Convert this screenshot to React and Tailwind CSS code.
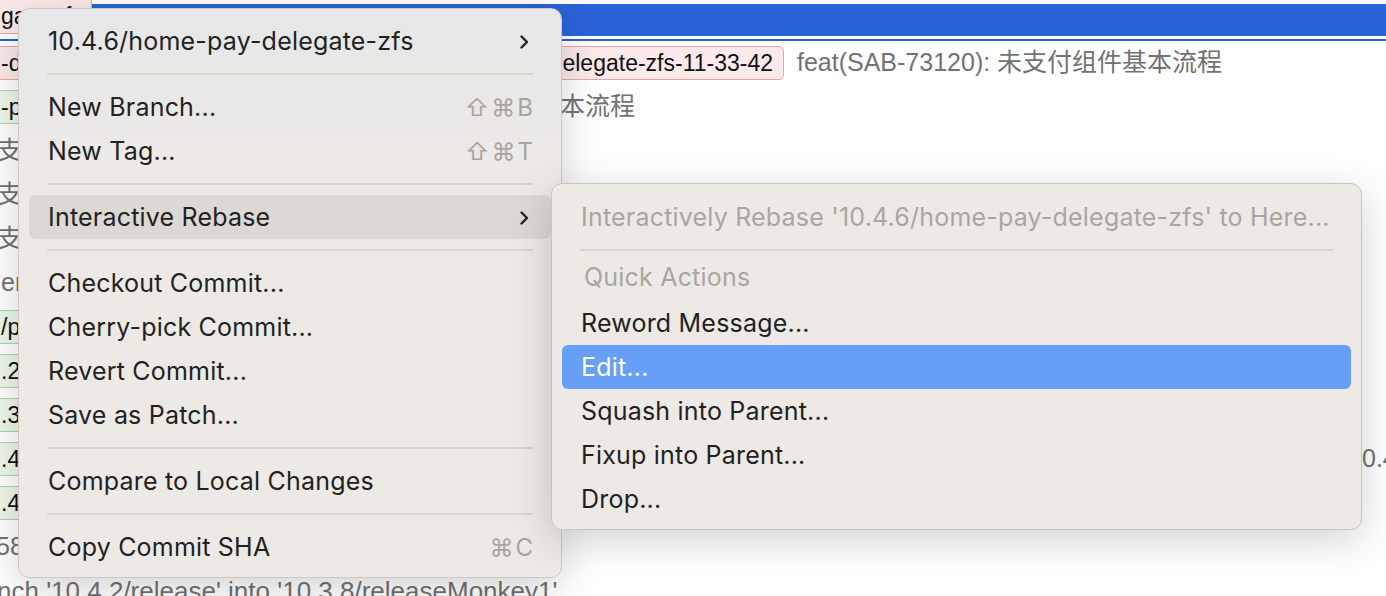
import React from "react";

const rowFont = { fontFamily: '"Liberation Sans", "Noto Sans CJK SC", sans-serif' };
const menuFont = { fontFamily: 'Inter, "Noto Sans", sans-serif' };
const keyFont = { fontFamily: 'Inter, "DejaVu Sans", sans-serif' };

const PinkTag = ({ children, className = "" }) => (
  <div
    className={`h-[34px] shrink-0 flex items-center px-[10px] rounded-[5px] border border-[#F1A3A3] bg-[#FCEAEA] text-[#111] text-[23px] whitespace-nowrap overflow-hidden ${className}`}
  >
    {children}
  </div>
);

const GreenTag = ({ children, className = "" }) => (
  <div
    className={`h-[34px] shrink-0 flex items-center px-[10px] rounded-[5px] border border-[#A9D9A0] bg-[#EDF7EA] text-[#111] text-[23px] whitespace-nowrap overflow-hidden ${className}`}
  >
    {children}
  </div>
);

const Msg = ({ children, className = "" }) => (
  <span className={`text-[#727272] text-[25px] whitespace-nowrap ${className}`}>{children}</span>
);

const Chevron = () => (
  <svg width="11" height="16" viewBox="0 0 11 16" fill="none">
    <path d="M2.5 2.5L8 8L2.5 13.5" stroke="#222" strokeWidth="2.4" strokeLinecap="round" strokeLinejoin="round" />
  </svg>
);

const Separator = () => (
  <div className="h-[22px] flex items-center px-[18px]">
    <div className="h-[2px] w-full bg-[#D8D5D1]" />
  </div>
);

const Item = ({ label, shortcut, chevron, active, selected, disabled }) => (
  <div
    className={`h-[44px] flex items-center justify-between pt-[1px] pl-[19px] ${shortcut ? "pr-[16px]" : "pr-[21px]"} rounded-[6px] ${
      active ? "bg-[#DCD9D4]" : ""
    } ${selected ? "bg-[#679EF6] text-white" : disabled ? "text-[#A9A6A2]" : "text-[#222]"}`}
  >
    <span className="whitespace-nowrap">{label}</span>
    {shortcut && (
      <span className="text-[#A8A5A1] text-[24px] tracking-[2px]" style={keyFont}>
        {shortcut}
      </span>
    )}
    {chevron && <Chevron />}
  </div>
);

const App = () => {
  return (
    <div className="relative w-[1386px] h-[596px] overflow-hidden bg-white" style={rowFont}>
      {/* commit list */}
      <div className="flex flex-col">
        <div className="h-[41px]">
          <div className="flex items-start">
            <PinkTag className="-ml-[10px] w-[102px] rounded-t-none border-t-0">gate-zfs</PinkTag>
            <div className="flex-1 mt-[4px] h-[32px] bg-[#2A63D8]" />
          </div>
          <div className="mt-[3px] h-[2px] bg-[#2A63D8]" />
        </div>

        <div className="h-[44px] flex items-center">
          <div className="w-[784px] shrink-0 flex items-center justify-between">
            <PinkTag className="-ml-[10px] w-[200px]">-delegate-zfs</PinkTag>
            <PinkTag className="justify-end w-[400px]">home-pay-delegate-zfs-11-33-42</PinkTag>
          </div>
          <Msg className="ml-[13px]">feat(SAB-73120): 未支付组件基本流程</Msg>
        </div>

        <div className="h-[44px] flex items-center">
          <div className="w-[635px] shrink-0 flex items-center justify-between">
            <GreenTag className="-ml-[10px] w-[200px]">-pay-delegate</GreenTag>
            <Msg>feat(SAB-73120): 未支付组件基本流程</Msg>
          </div>
        </div>

        {["支付组件基本流程", "支付组件基本流程", "支付组件基本流程"].map((t, i) => (
          <div key={i} className="h-[44px] flex items-center">
            <Msg className="-ml-[3px]">{t}</Msg>
          </div>
        ))}

        <div className="h-[44px] flex items-center">
          <Msg className="ml-[1px]">erge branch</Msg>
        </div>

        {["/pay-release", ".2/release", ".3/release"].map((t, i) => (
          <div key={i} className="h-[44px] flex items-center">
            <GreenTag className="-ml-[10px] w-[200px]">{t}</GreenTag>
          </div>
        ))}

        <div className="h-[44px] flex items-center">
          <div className="w-[1362px] shrink-0 flex items-center">
            <GreenTag className="-ml-[10px] w-[200px]">.4/release</GreenTag>
          </div>
          <Msg>0.4.6/release'</Msg>
        </div>

        <div className="h-[44px] flex items-center">
          <GreenTag className="-ml-[10px] w-[200px]">.4/release</GreenTag>
        </div>

        <div className="h-[44px] flex items-center">
          <Msg className="-ml-[4px]">58a1c</Msg>
        </div>

        <div className="h-[44px] flex items-center">
          <Msg className="-ml-[3px] text-[26px]">nch '10.4.2/release' into '10.3.8/releaseMonkey1'</Msg>
        </div>
      </div>

      {/* context menu */}
      <div
        className="absolute left-[18px] top-[8px] w-[544px] h-[570px] rounded-[11px] border border-[#CCC9C5] bg-linear-to-b from-[#E6E7E8] to-[#EDEAE6] to-30% shadow-[0_10px_40px_rgba(0,0,0,0.18)] pt-[10px] px-[10px] text-[25px] tracking-[0.2px]"
        style={menuFont}
      >
        <Item label="10.4.6/home-pay-delegate-zfs" chevron />
        <Separator />
        <Item label="New Branch..." shortcut="⇧⌘B" />
        <Item label="New Tag..." shortcut="⇧⌘T" />
        <Separator />
        <Item label="Interactive Rebase" chevron active />
        <Separator />
        <Item label="Checkout Commit..." />
        <Item label="Cherry-pick Commit..." />
        <Item label="Revert Commit..." />
        <Item label="Save as Patch..." />
        <Separator />
        <Item label="Compare to Local Changes" />
        <Separator />
        <Item label="Copy Commit SHA" shortcut="⌘C" />
      </div>

      {/* submenu */}
      <div
        className="absolute left-[551px] top-[183px] w-[811px] h-[347px] rounded-[11px] border border-[#C9C6C2] bg-[#EDEAE6] shadow-[0_10px_40px_rgba(0,0,0,0.18)] pt-[11px] px-[10px] text-[25px] tracking-[0.2px]"
        style={menuFont}
      >
        <Item label="Interactively Rebase '10.4.6/home-pay-delegate-zfs' to Here..." disabled />
        <Separator />
        <div className="h-[40px] flex items-center pb-[7px] pl-[22px] text-[#A9A6A2]">Quick Actions</div>
        <Item label="Reword Message..." />
        <Item label="Edit..." selected />
        <Item label="Squash into Parent..." />
        <Item label="Fixup into Parent..." />
        <Item label="Drop..." />
      </div>
    </div>
  );
};

export default App;
